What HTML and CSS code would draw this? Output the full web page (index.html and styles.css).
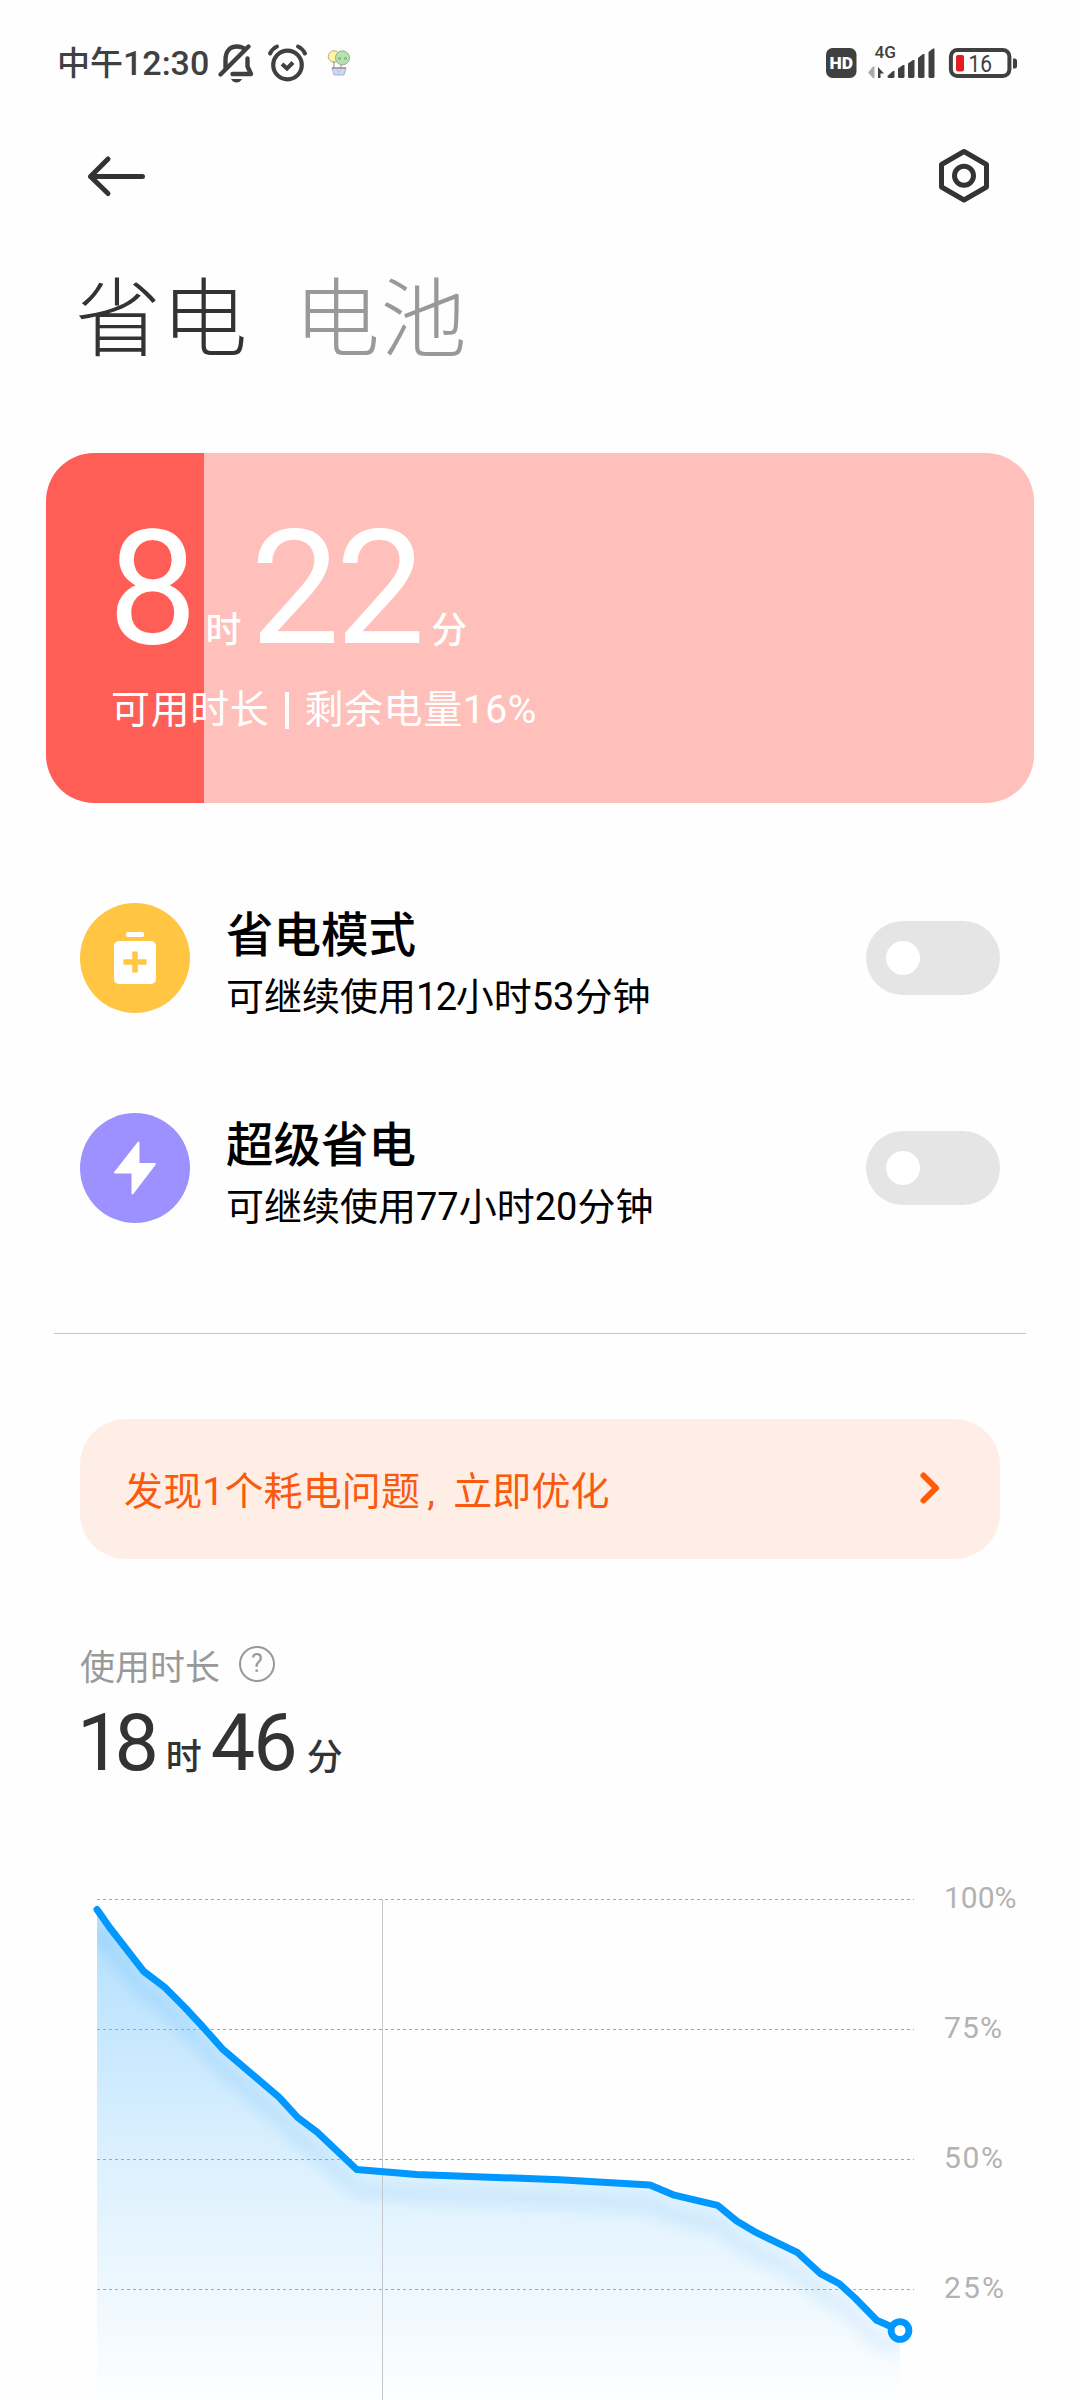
FILE: index.html
```html
<!DOCTYPE html>
<html lang="zh-CN">
<head>
<meta charset="utf-8">
<title>省电</title>
<link rel="stylesheet" href="styles.css">
</head>
<body>
<header class="status">
  <span class="clock">中午<span class="clock-num">12:30</span></span>
  <svg class="st-icons" width="140" height="44" viewBox="216 41 140 44" fill="none" stroke="#404040">
    <g stroke-width="4.400" stroke-linecap="round" stroke-linejoin="round">
      <path d="M225.500 68V60C225.500 51 230 46.500 237 46.500C240.500 46.500 243 47.500 245 49.500"/>
      <path d="M248.500 46.500L220.500 74.500"/>
      <path d="M247.500 58.500V66.500L251 74H232.500"/>
    </g>
    <path d="M231 79H242Q240 82.500 236.500 82.500T231 79Z" fill="#404040" stroke="none"/>
    <circle cx="287.500" cy="65" r="14.300" stroke-width="4.200"/>
    <path d="M282 64L287 68.500L293 62.500" stroke-width="4"/>
    <path d="M270 53.500Q272.500 48.500 277 46.500M305 53.500Q302.500 48.500 298 46.500" stroke-width="4" stroke-linecap="round"/>
    <circle cx="334" cy="56.500" r="5.800" fill="#faf5a4" stroke="#a39c78" stroke-width=".8"/>
    <path d="M334 61V68M341 63V68" stroke="#a08d80" stroke-width="1"/>
    <circle cx="342.500" cy="57.800" r="7" fill="#b5e2ae" stroke="#84a07e" stroke-width=".8"/>
    <circle cx="339.500" cy="58.500" r="1" stroke="#6c8667" stroke-width=".8"/><circle cx="345.500" cy="58.500" r="1" stroke="#6c8667" stroke-width=".8"/>
    <path d="M332 68H346L344 75H334Z" fill="#c5ddfa" stroke="#8fa4c4" stroke-width=".8"/>
    <path d="M332 68H346" stroke="#a67f80" stroke-width="1.200"/>
    <path d="M337 70L339 72.500L341 70" stroke="#e9a0bd" stroke-width="1"/>
  </svg>
  <svg class="st-right" width="192" height="50" viewBox="826 38 192 50">
    <rect x="826" y="48" width="30.500" height="30" rx="6.500" fill="#404040"/>
    <text class="t-hd" x="829.500" y="68.500" textLength="23.500" lengthAdjust="spacingAndGlyphs">HD</text>
    <text class="t-4g" x="874.500" y="58" textLength="21.500" lengthAdjust="spacingAndGlyphs">4G</text>
    <path d="M868 72.500L873 66.500H874.500V78H873Z" fill="#aaa"/>
    <path d="M878 78V67L884 73.500H880.500V78Z" fill="#404040"/>
    <g fill="#404040">
      <path d="M887.500 76L893 71H894.500V77L893.500 78H888.500L887.500 77Z"/>
      <path d="M898 68.500L903 65H904.500V77L903.500 78H899L898 77Z"/>
      <path d="M908 63.500L913 60H914.500V77L913.500 78H909L908 77Z"/>
      <path d="M918 58L923 54H924.500V77L923.500 78H919L918 77Z"/>
      <path d="M928.500 52L933 48.500H934.500V77L933.500 78H929.500L928.500 77Z"/>
    </g>
    <rect x="950.900" y="49.900" width="58.500" height="26.200" rx="6.500" fill="none" stroke="#404040" stroke-width="4"/>
    <path d="M1013 58.500H1014.500Q1017 58.500 1017 61V66Q1017 68.500 1014.500 68.500H1013Z" fill="#404040"/>
    <rect x="956" y="55" width="8" height="16.500" rx="2" fill="#e61b1b"/>
    <text class="t-bat" x="968.500" y="71.500" textLength="23.500" lengthAdjust="spacingAndGlyphs">16</text>
  </svg>
</header>
<nav class="bar">
  <svg width="62" height="46" viewBox="86 153 62 46" fill="none" stroke="#333" stroke-width="5" stroke-linecap="round" stroke-linejoin="round"><path d="M142.500 176.500H90.500M108 159L90.500 176.500L108 193.500"/></svg>
  <svg width="54" height="58" viewBox="937 147 54 58" fill="none" stroke="#333" stroke-width="5" stroke-linejoin="round"><path d="M964 151.500L986.500 164.500V187L964 200L941.500 187V164.500Z"/><circle cx="964" cy="175.700" r="9.500"/></svg>
</nav>
<div class="tabs"><span class="tab on">省电</span><span class="tab">电池</span></div>
<main>
  <section class="card">
    <div class="big"><span class="n">8</span><span class="u u1">时</span><span class="n">22</span><span class="u u2">分</span></div>
    <div class="sub">可用时长<i class="sep"></i>剩余电量<span class="sub-num">16%</span></div>
  </section>
  <section class="rows">
    <div class="row">
      <svg class="ic" width="110" height="110" viewBox="80 903 110 110"><circle cx="135" cy="958" r="55" fill="#ffc543"/><rect x="126" y="932" width="18" height="5" rx="1.800" fill="#fff"/><rect x="114" y="941" width="42" height="43" rx="5" fill="#fff"/><path d="M123.500 962H146.500M135 951.500V972.500" stroke="#ffc543" stroke-width="5.500"/></svg>
      <div class="txt"><div class="t1">省电模式</div><div class="t2">可继续使用<b class="tight">12</b>小时<b>53</b>分钟</div></div>
      <span class="toggle"></span>
    </div>
    <div class="row">
      <svg class="ic" width="110" height="110" viewBox="80 1113 110 110"><circle cx="135" cy="1168" r="55" fill="#9d90ff"/><path d="M138.500 1142.500V1164H155L132.500 1193.500V1172.500H115Z" fill="#fff" stroke="#fff" stroke-width="2" stroke-linejoin="round"/></svg>
      <div class="txt"><div class="t1">超级省电</div><div class="t2">可继续使用<b>77</b>小时<b>20</b>分钟</div></div>
      <span class="toggle"></span>
    </div>
  </section>
  <hr class="rule">
  <section class="banner"><span>发现<b>1</b>个耗电问题<i class="comma">,</i>立即优化</span>
    <svg width="24" height="36" viewBox="918 1471 24 36" fill="none" stroke="#ff5a0a" stroke-width="6" stroke-linecap="round" stroke-linejoin="round"><path d="M923.500 1476.500L936 1489L923.500 1501.500"/></svg>
  </section>
  <section class="usage">
    <div class="label"><span>使用时长</span><span class="q">?</span></div>
    <div class="dur"><span class="n n1">18</span><span class="u">时</span><span class="n">46</span><span class="u">分</span></div>
  </section>
  <section class="chart">
    <svg width="1080" height="524" viewBox="0 1876 1080 524">
      <defs>
        <linearGradient id="area" gradientUnits="userSpaceOnUse" x1="0" y1="1910" x2="0" y2="2400"><stop offset="0" stop-color="#b2dfff"/><stop offset=".5" stop-color="#dbf0fe"/><stop offset="1" stop-color="#fdfeff"/></linearGradient>
        <linearGradient id="shade" gradientUnits="userSpaceOnUse" x1="0" y1="1910" x2="0" y2="2340"><stop offset="0" stop-color="#3aa0ea" stop-opacity=".15"/><stop offset="1" stop-color="#3aa0ea" stop-opacity=".09"/></linearGradient>
        <filter id="soft" x="-5%" y="-10%" width="110%" height="120%"><feGaussianBlur stdDeviation="6"/></filter>
        <clipPath id="under"><path d="M97 1909.500L110 1928L143.700 1971.400L164.700 1987.300L185.300 2008L203 2027L222.300 2048.800L279 2097.200L297.700 2117.500L317.300 2132.300L356.700 2169.500L416.700 2174.600L560 2179.700L650 2185L674.300 2195.200L717.700 2205.400L736.700 2221L756 2232.400L797.700 2252.700L820 2273.300L839 2283.500L855 2298L876.700 2320.300L900 2330.500V2400H97Z"/></clipPath>
      </defs>
      <g clip-path="url(#under)">
        <rect x="97" y="1900" width="803" height="500" fill="url(#area)"/>
        <path class="shadow" filter="url(#soft)" stroke="url(#shade)" transform="translate(0 20)" d="M97 1909.500L110 1928L143.700 1971.400L164.700 1987.300L185.300 2008L203 2027L222.300 2048.800L279 2097.200L297.700 2117.500L317.300 2132.300L356.700 2169.500L416.700 2174.600L560 2179.700L650 2185L674.300 2195.200L717.700 2205.400L736.700 2221L756 2232.400L797.700 2252.700L820 2273.300L839 2283.500L855 2298L876.700 2320.300L900 2330.500"/>
      </g>
      <path class="grid" d="M97 1899.500H914M97 2029.500H914M97 2159.500H914M97 2289.500H914"/>
      <path class="vline" d="M382.500 1899V2400"/>
      <path class="line" d="M97 1909.500L110 1928L143.700 1971.400L164.700 1987.300L185.300 2008L203 2027L222.300 2048.800L279 2097.200L297.700 2117.500L317.300 2132.300L356.700 2169.500L416.700 2174.600L560 2179.700L650 2185L674.300 2195.200L717.700 2205.400L736.700 2221L756 2232.400L797.700 2252.700L820 2273.300L839 2283.500L855 2298L876.700 2320.300L900 2330.500"/>
      <circle cx="900" cy="2330.500" r="8.900" fill="#fff" stroke="#0097ff" stroke-width="6.800"/>
      <g class="axis"><text x="944" y="1908">100%</text><text x="944" y="2038" textLength="58">75%</text><text x="944" y="2168" textLength="59">50%</text><text x="944" y="2298" textLength="60">25%</text></g>
    </svg>
  </section>
</main>
</body>
</html>
```
FILE: styles.css
```css
* { box-sizing: border-box; }
html, body { margin: 0; padding: 0; }
body {
  width: 1080px; height: 2400px; overflow: hidden; background: #fefefe; color: #000;
  font-family: Roboto, "Noto Sans CJK SC", sans-serif;
  display: flex; flex-direction: column;
}
svg { display: block; flex: none; }
b, i { font-weight: inherit; font-style: normal; }

.status { height: 126px; padding: 0 62px 0 57px; display: flex; align-items: center; color: #404040; }
.clock { width: 159px; font-size: 33px; line-height: 40px; font-weight: 500; white-space: nowrap; }
.clock-num { font-size: 34px; }
.st-right { margin-left: auto; }
.t-hd { font: 900 16.5px Roboto, sans-serif; fill: #fff; }
.t-4g { font: 500 16px Roboto, sans-serif; fill: #404040; }
.t-bat { font: 400 23px Roboto, sans-serif; fill: #404040; }

.bar { height: 100px; padding: 0 89px 0 86px; display: flex; justify-content: space-between; align-items: center; }
.tabs { height: 227px; padding: 35px 0 0 75px; display: flex; gap: 46px; align-items: flex-start; }
.tab { font-size: 86px; line-height: 120px; font-weight: 300; color: #999; white-space: nowrap; letter-spacing: .5px; }
.tab.on { color: #333; }

.card {
  margin: 0 46px; height: 350px; border-radius: 48px; padding: 57px 0 0 62px; color: #fff;
  background: linear-gradient(90deg, #ff5e57 158px, #ffbfba 158px);
}
.big { display: flex; align-items: baseline; height: 158px; line-height: 158px; }
.big .n { font-size: 159px; letter-spacing: -4px; }
.big .u { font-size: 36px; font-weight: 500; }
.big .u1 { margin: 0 9px 0 12px; }
.big .u2 { margin-left: 10px; }
.sub { margin: 15px 0 0 3px; font-size: 39px; line-height: 54px; letter-spacing: .6px; display: flex; align-items: center; white-space: nowrap; }
.sep { width: 4px; height: 37px; background: #fff; margin: 0 15px 0 16px; }

.rows { padding-top: 50px; height: 530px; }
.row { height: 210px; padding: 0 80px; display: flex; align-items: center; }
.txt { margin-left: 36px; padding-top: 11px; flex: 1; white-space: nowrap; }
.t1 { font-size: 47.5px; line-height: 66px; font-weight: 500; }
.t2 { font-size: 38px; line-height: 56px; }
.tight { letter-spacing: -1.5px; }
.toggle { width: 134px; height: 74px; border-radius: 37px; background: #e5e5e5; padding: 20px; }
.toggle::before { content: ""; display: block; width: 34px; height: 34px; border-radius: 50%; background: #fff; }
.rule { margin: 0 54px; border: 0; height: 1px; background: #c6c6c6; }

.banner { margin: 85px 80px 0; height: 140px; border-radius: 46px; background: #ffeee6; color: #fa5a0f; display: flex; align-items: center; justify-content: space-between; padding: 0 58px 2px 44px; font-size: 39px; letter-spacing: .15px; white-space: nowrap; }
.comma { display: inline-block; width: 33px; padding-left: 7px; }

.usage { padding: 79px 80px 0; height: 317px; }
.label { display: flex; align-items: center; height: 52px; font-size: 35px; color: #999; }
.q { width: 36px; height: 36px; margin-left: 19px; border: 2.5px solid #999; border-radius: 50%; font-size: 25px; line-height: 31px; text-align: center; }
.dur { display: flex; align-items: baseline; color: #333; height: 90px; line-height: 90px; padding-top: 8px; }
.dur .n { font-size: 79px; letter-spacing: -2px; }
.dur .n1 { margin-left: -3px; letter-spacing: -7px; }
.dur .u { font-size: 36px; font-weight: 500; margin: 0 10px 0 11px; }
.dur .n1 + .u { margin: 0 9px 0 14px; }

.chart { height: 524px; }
.grid { stroke: #a6a6a6; stroke-width: 1; stroke-dasharray: 3 3; fill: none; }
.vline { stroke: #c4c8cc; stroke-width: 1; }
.line { fill: none; stroke: #0097ff; stroke-width: 7; stroke-linejoin: round; stroke-linecap: round; }
.shadow { fill: none; stroke-width: 18; }
.axis text { font: 400 30px Roboto, sans-serif; fill: #b2b2b2; }
```
